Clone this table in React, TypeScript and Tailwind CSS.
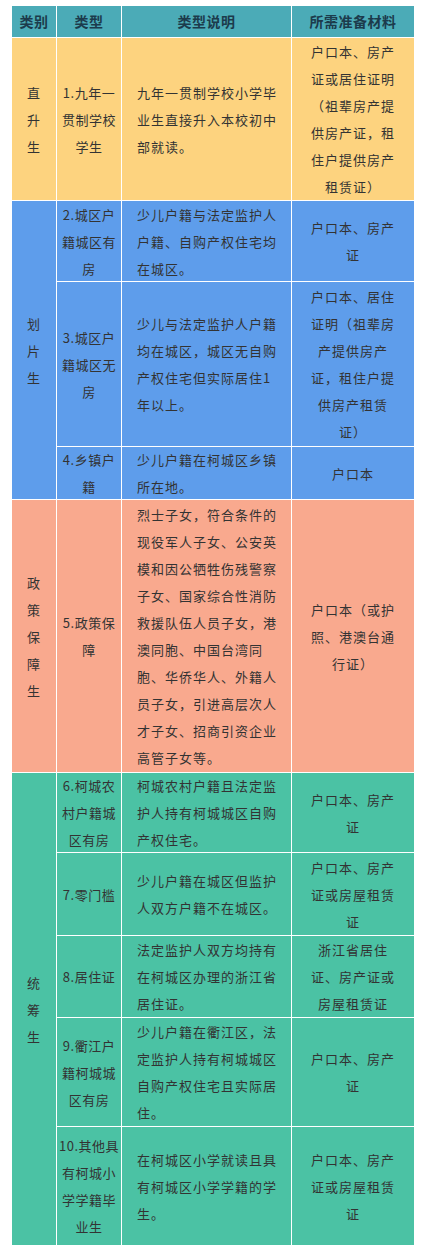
import React from "react";

type Group = {
  label: string[];
  bg: string;
  rows: { type: string[]; desc: string[]; docs: string[] }[];
};

const groups: Group[] = [
  {
    label: ["直", "升", "生"],
    bg: "bg-[#fdd37f]",
    rows: [
      {
        type: ["1.九年一", "贯制学校", "学生"],
        desc: ["九年一贯制学校小学毕", "业生直接升入本校初中", "部就读。"],
        docs: ["户口本、房产", "证或居住证明", "（祖辈房产提", "供房产证，租", "住户提供房产", "租赁证）"],
      },
    ],
  },
  {
    label: ["划", "片", "生"],
    bg: "bg-[#5e9deb]",
    rows: [
      {
        type: ["2.城区户", "籍城区有", "房"],
        desc: ["少儿户籍与法定监护人", "户籍、自购产权住宅均", "在城区。"],
        docs: ["户口本、房产", "证"],
      },
      {
        type: ["3.城区户", "籍城区无", "房"],
        desc: ["少儿与法定监护人户籍", "均在城区，城区无自购", "产权住宅但实际居住1", "年以上。"],
        docs: ["户口本、居住", "证明（祖辈房", "产提供房产", "证，租住户提", "供房产租赁", "证）"],
      },
      {
        type: ["4.乡镇户", "籍"],
        desc: ["少儿户籍在柯城区乡镇", "所在地。"],
        docs: ["户口本"],
      },
    ],
  },
  {
    label: ["政", "策", "保", "障", "生"],
    bg: "bg-[#f9a98e]",
    rows: [
      {
        type: ["5.政策保", "障"],
        desc: [
          "烈士子女，符合条件的",
          "现役军人子女、公安英",
          "模和因公牺牲伤残警察",
          "子女、国家综合性消防",
          "救援队伍人员子女，港",
          "澳同胞、中国台湾同",
          "胞、华侨华人、外籍人",
          "员子女，引进高层次人",
          "才子女、招商引资企业",
          "高管子女等。",
        ],
        docs: ["户口本（或护", "照、港澳台通", "行证）"],
      },
    ],
  },
  {
    label: ["统", "筹", "生"],
    bg: "bg-[#4bc2a4]",
    rows: [
      {
        type: ["6.柯城农", "村户籍城", "区有房"],
        desc: ["柯城农村户籍且法定监", "护人持有柯城城区自购", "产权住宅。"],
        docs: ["户口本、房产", "证"],
      },
      {
        type: ["7.零门槛"],
        desc: ["少儿户籍在城区但监护", "人双方户籍不在城区。"],
        docs: ["户口本、房产", "证或房屋租赁", "证"],
      },
      {
        type: ["8.居住证"],
        desc: ["法定监护人双方均持有", "在柯城区办理的浙江省", "居住证。"],
        docs: ["浙江省居住", "证、房产证或", "房屋租赁证"],
      },
      {
        type: ["9.衢江户", "籍柯城城", "区有房"],
        desc: ["少儿户籍在衢江区，法", "定监护人持有柯城城区", "自购产权住宅且实际居", "住。"],
        docs: ["户口本、房产", "证"],
      },
      {
        type: ["10.其他具", "有柯城小", "学学籍毕", "业生"],
        desc: ["在柯城区小学就读且具", "有柯城区小学学籍的学", "生。"],
        docs: ["户口本、房产", "证或房屋租赁", "证"],
      },
    ],
  },
];

const spans = [
  "row-span-1",
  "row-span-3",
  "row-span-1",
  "row-span-5",
];

function Lines({ lines }: { lines: string[] }) {
  return (
    <>
      {lines.map((l, i) => (
        <React.Fragment key={i}>
          {l}
          {i < lines.length - 1 && <br />}
        </React.Fragment>
      ))}
    </>
  );
}

export default function App() {
  const head = "bg-[#4babb7] flex items-center justify-center text-[14px] font-bold tracking-[0.5px] text-[#1c3b4c]";
  return (
    <div
      className="bg-white min-h-[1260px] pt-[6px] pl-[12px]"
      style={{ fontFamily: '"Noto Sans CJK SC", "Noto Sans", sans-serif' }}
    >
      <div className="grid w-[402px] grid-cols-[44px_64px_169px_122px] grid-rows-[31px_162px_80px_164px_52px_272px_79px_82px_81px_108px_118px] gap-px bg-white text-[13px] leading-[27px] tracking-[1px] text-[#333333]">
        <div className={head}>类别</div>
        <div className={head}>类型</div>
        <div className={head}>类型说明</div>
        <div className={head}>所需准备材料</div>

        {groups.map((g, gi) => (
          <React.Fragment key={gi}>
            <div className={`${g.bg} ${spans[gi]} col-start-1 flex items-center justify-center text-center`}>
              <div>
                <Lines lines={g.label} />
              </div>
            </div>
            {g.rows.map((r, ri) => (
              <React.Fragment key={ri}>
                <div className={`${g.bg} col-start-2 flex items-center justify-center text-center whitespace-nowrap tracking-[0.5px]`}>
                  <div>
                    <Lines lines={r.type} />
                  </div>
                </div>
                <div className={`${g.bg} col-start-3 flex items-center pl-[15px] whitespace-nowrap`}>
                  <div>
                    <Lines lines={r.desc} />
                  </div>
                </div>
                <div className={`${g.bg} col-start-4 flex items-center justify-center text-center whitespace-nowrap`}>
                  <div>
                    <Lines lines={r.docs} />
                  </div>
                </div>
              </React.Fragment>
            ))}
          </React.Fragment>
        ))}
      </div>
    </div>
  );
}
